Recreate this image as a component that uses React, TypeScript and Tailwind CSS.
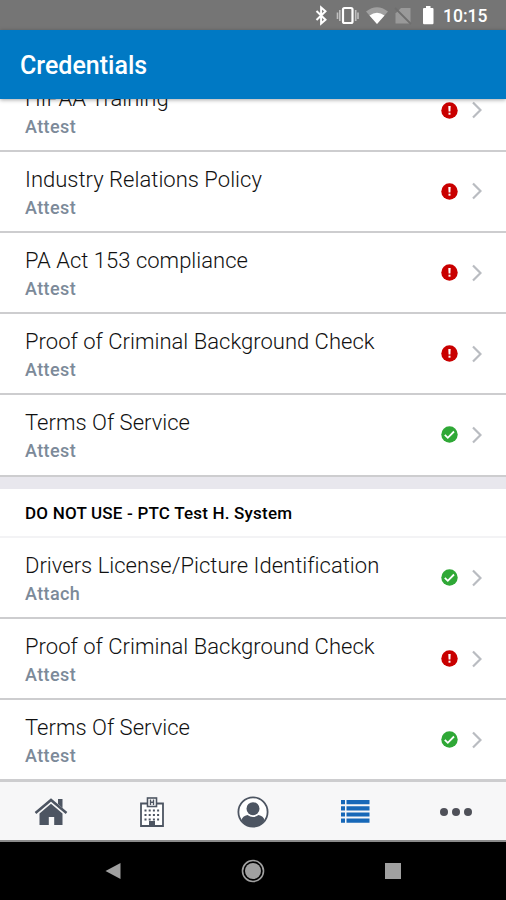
type Status = 'alert' | 'done'

interface Credential {
  name: string
  action: string
  status: Status
}

const generalCredentials: Credential[] = [
  { name: 'HIPAA Training', action: 'Attest', status: 'alert' },
  { name: 'Industry Relations Policy', action: 'Attest', status: 'alert' },
  { name: 'PA Act 153 compliance', action: 'Attest', status: 'alert' },
  {
    name: 'Proof of Criminal Background Check',
    action: 'Attest',
    status: 'alert',
  },
  { name: 'Terms Of Service', action: 'Attest', status: 'done' },
]

const systemCredentials: Credential[] = [
  {
    name: 'Drivers License/Picture Identification',
    action: 'Attach',
    status: 'done',
  },
  {
    name: 'Proof of Criminal Background Check',
    action: 'Attest',
    status: 'alert',
  },
  { name: 'Terms Of Service', action: 'Attest', status: 'done' },
]

function StatusIcon({ status }: { status: Status }) {
  if (status === 'done') {
    return (
      <svg viewBox="0 0 17 17" className="size-[17px]">
        <circle cx="8.5" cy="8.5" r="8.2" fill="#2fa836" />
        <path
          d="M3.8 8.8l3 3 6.2-6.3"
          fill="none"
          stroke="#fff"
          strokeWidth="1.8"
        />
      </svg>
    )
  }

  return (
    <svg viewBox="0 0 17 17" className="size-[17px]">
      <circle cx="8.5" cy="8.5" r="8.2" fill="#c90000" />
      <path d="M7.3 4h2.4l-.3 5.4H7.6z" fill="#fff" />
      <rect x="7.5" y="10.7" width="2" height="2" fill="#fff" />
    </svg>
  )
}

function CredentialRow({ name, action, status }: Credential) {
  return (
    <li className="flex h-[81.2px] shrink-0 items-center justify-between border-b-2 border-[#cdcdcf] pr-6 pl-[25px]">
      <div className="flex flex-col pt-[3px]">
        <span className="text-[22px] leading-[30px] font-light tracking-[0.02px] whitespace-nowrap text-[#111]">
          {name}
        </span>
        <span className="text-[18px] leading-[26px] font-medium tracking-[0.4px] text-[#7c8a99]">
          {action}
        </span>
      </div>
      <div className="flex items-center gap-[14px]">
        <StatusIcon status={status} />
        <svg viewBox="0 0 10 18" className="h-[18px] w-[10px]">
          <path
            d="M1 1.5L8.5 9 1 16.5"
            fill="none"
            stroke="#b9bcc1"
            strokeWidth="2.2"
          />
        </svg>
      </div>
    </li>
  )
}

function StatusBar() {
  return (
    <div className="flex h-[30px] shrink-0 items-center justify-end bg-[#757575] pr-[18px] text-white">
      {/* Bluetooth, vibrate, wifi, sim, battery */}
      <svg viewBox="0 0 126 30" className="h-[30px] w-[126px]">
        <path
          d="M4.5 11l9 8.7-4.4 3.9V7.4l4.4 3.900-9 8.700"
          fill="none"
          stroke="#fff"
          strokeWidth="2"
        />
        <rect
          x="31"
          y="8"
          width="9.5"
          height="15"
          rx="1.5"
          fill="none"
          stroke="#fff"
          strokeWidth="2.2"
        />
        <path
          d="M27.8 10v11M43.7 10v11M25.5 12.5v6.5M46 12.5v6.5"
          stroke="#c0c0c0"
          strokeWidth="1.6"
        />
        <path d="M54 11.5q11-8.500 22 0L65 24z" fill="#a0a0a0" />
        <path d="M57.5 15.5q7.500-5.500 15 0L65 24z" fill="#fff" />
        <path d="M89 8h9.500v15.500h-15V13.500z" fill="#999" />
        <path d="M83 8l16 16" stroke="#6e6e6e" strokeWidth="1.8" />
        <path
          d="M112 8h2V6h4.500v2h2q1 0 1 1v14q0 1.200-1 1.200H112q-1 0-1-1.200V9q0-1 1-1z"
          fill="#fff"
        />
      </svg>
      <span className="ml-[5px] w-[45px] pt-[2px] text-[17.5px] leading-[28px] font-medium">
        10:15
      </span>
    </div>
  )
}

function TabBar() {
  return (
    <nav className="grid h-[63px] shrink-0 grid-cols-5 items-center justify-items-center border-t-[3px] border-b-2 border-t-[#cdcdcf] border-b-[#8b8b8b] bg-[#f7f7f8] pt-px">
      <svg viewBox="0 0 34 30" className="h-[30px] w-[34px]" fill="#4d5562">
        <path d="M24 2h4.5v9L24 7z" />
        <path
          d="M1.5 16L17 3l15.500 13"
          fill="none"
          stroke="#4d5562"
          strokeWidth="2.5"
        />
        <path d="M17 6.8l11.500 9.700V28h-8.300v-8h-5.400v8H5.500V16.500z" />
      </svg>

      <svg viewBox="0 0 26 32" className="ml-px h-8 w-[26px]" fill="#4d5562">
        <path
          d="M8 7.5H2v22.500h22V7.500h-6"
          fill="#fff"
          stroke="#4d5562"
          strokeWidth="1.8"
        />
        <rect
          x="8.5"
          y="2"
          width="9"
          height="8.5"
          fill="#fff"
          stroke="#4d5562"
          strokeWidth="1.6"
        />
        <path
          d="M11.5 3.5v5.500M14.500 3.500v5.500M11.500 6.300h3"
          stroke="#4d5562"
          strokeWidth="1.4"
        />
        <path
          d="M5.5 14.5h15.500M5.500 19h15.500M5.500 23.500h15.500"
          stroke="#4d5562"
          strokeWidth="2"
          strokeDasharray="2 2.2"
        />
        <rect x="10" y="25" width="6" height="5" />
      </svg>

      <svg viewBox="0 0 32 32" className="ml-px size-8" fill="#4d5562">
        <circle
          cx="16"
          cy="16"
          r="14.6"
          fill="#fff"
          stroke="#4d5562"
          strokeWidth="1.8"
        />
        <circle cx="16" cy="12.7" r="6.5" />
        <path d="M4.5 24q1-4 6-5 5.500 4 11 0 5 1 6 5Q23 31 16 31T4.500 24z" />
      </svg>

      <svg viewBox="0 0 30 24" className="ml-px h-6 w-[30px]" fill="#1768b8">
        <path d="M1 0h4v4.200H1zM1 6.200h4v4.200H1zM1 12.400h4v4.200H1zM1 18.600h4v4.200H1z" />
        <path d="M6.500 0h23v4.200h-23zM6.500 6.200h23v4.200h-23zM6.500 12.400h23v4.200h-23zM6.500 18.600h23v4.200h-23z" />
      </svg>

      <svg
        viewBox="0 0 34 10"
        className="ml-[2px] h-[10px] w-[34px]"
        fill="#4f5159"
      >
        <circle cx="5" cy="5" r="4" />
        <circle cx="17" cy="5" r="4" />
        <circle cx="29" cy="5" r="4" />
      </svg>
    </nav>
  )
}

function AndroidNav() {
  return (
    <div className="grid h-[58px] shrink-0 grid-cols-3 items-center justify-items-center bg-black px-[43px]">
      <svg viewBox="0 0 16 18" className="h-[18px] w-4" fill="#a0a0a0">
        <path d="M0.5 9L15.5 1v16z" />
      </svg>
      <svg viewBox="0 0 24 24" className="size-6" fill="#a0a0a0">
        <circle cx="12" cy="12" r="8" />
        <circle
          cx="12"
          cy="12"
          r="10.5"
          fill="none"
          stroke="#a0a0a0"
          strokeWidth="1.6"
        />
      </svg>
      <div className="size-4 bg-[#a0a0a0]" />
    </div>
  )
}

export default function App() {
  return (
    <div className="flex h-[900px] w-[506px] flex-col overflow-hidden bg-white font-['Roboto',sans-serif]">
      <StatusBar />
      <header className="z-10 flex h-[69px] shrink-0 items-center bg-[#0079c4] pt-[3px] pl-5 shadow-[0_1px_4px_rgba(0,0,0,0.35)]">
        <h1 className="text-[25px] font-medium text-white">Credentials</h1>
      </header>

      <main className="flex min-h-0 flex-1 flex-col overflow-hidden">
        <ul className="-mt-[28.4px] flex shrink-0 flex-col">
          {generalCredentials.map((credential) => (
            <CredentialRow key={credential.name} {...credential} />
          ))}
        </ul>
        <div className="h-3 shrink-0 bg-[#e8e7ed]" />
        <h2 className="flex h-[49.4px] shrink-0 items-center border-b-2 border-[#f3f3f5] pt-1 pl-[25px] text-[17px] font-medium tracking-[0.2px] text-black">
          DO NOT USE - PTC Test H. System
        </h2>
        <ul className="flex shrink-0 flex-col">
          {systemCredentials.map((credential) => (
            <CredentialRow key={credential.name} {...credential} />
          ))}
        </ul>
      </main>

      <TabBar />
      <AndroidNav />
    </div>
  )
}
